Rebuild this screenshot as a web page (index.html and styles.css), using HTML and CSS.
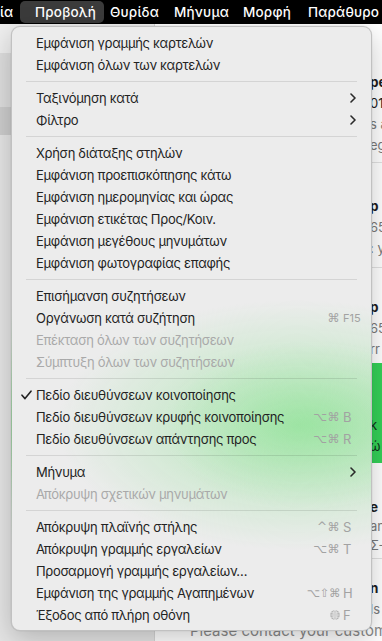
FILE: index.html
```html
<!DOCTYPE html>
<html lang="el">
<head>
<meta charset="utf-8">
<title>Mail – Προβολή</title>
<link rel="stylesheet" href="styles.css">
</head>
<body>
<div class="screen">
  <header class="menubar">
    <span class="mb-item mb-first">ία</span>
    <span class="mb-item mb-active">Προβολή</span>
    <span class="mb-item mb-w1">Θυρίδα</span>
    <span class="mb-item mb-w2">Μήνυμα</span>
    <span class="mb-item mb-w3">Μορφή</span>
    <span class="mb-item">Παράθυρο</span>
  </header>

  <div class="workspace">
    <aside class="sidebar">
      <div class="sb-top"></div>
      <div class="sb-group"></div>
      <div class="sb-selected"></div>
      <div class="sb-rest"></div>
    </aside>
    <main class="list">
      <div class="card card-a">
        <div class="ln strong">pe</div>
        <div class="ln">01</div>
        <div class="ln dim">s a</div>
        <div class="ln dim">eg</div>
      </div>
      <div class="card card-b">
        <div class="ln strong">p</div>
        <div class="ln dim">65</div>
        <div class="ln dim">: y</div>
      </div>
      <div class="card card-c">
        <div class="ln strong">p</div>
        <div class="ln dim">65</div>
        <div class="ln dim">rr</div>
      </div>
      <div class="card card-green">
        <div class="ln">k</div>
        <div class="ln">ώ</div>
      </div>
      <div class="card card-e">
        <div class="ln strong">e</div>
        <div class="ln dim">an</div>
        <div class="ln dim">Σ-</div>
      </div>
      <div class="card card-f">
        <div class="ln strong">n</div>
        <div class="ln dim">ls</div>
        <div class="ln note">Please contact your customer service</div>
      </div>
    </main>
  </div>

  <nav class="menu">
    <div class="item"><span class="label">Εμφάνιση γραμμής καρτελών</span></div>
    <div class="item"><span class="label">Εμφάνιση όλων των καρτελών</span></div>
    <div class="sep"></div>
    <div class="item"><span class="label">Ταξινόμηση κατά</span>
      <svg class="chev" width="6" height="10" viewBox="0 0 6 10"><path d="M1 1 L5 5 L1 9" fill="none" stroke="#2a2a2a" stroke-width="1.6" stroke-linecap="round" stroke-linejoin="round"/></svg></div>
    <div class="item"><span class="label">Φίλτρο</span>
      <svg class="chev" width="6" height="10" viewBox="0 0 6 10"><path d="M1 1 L5 5 L1 9" fill="none" stroke="#2a2a2a" stroke-width="1.6" stroke-linecap="round" stroke-linejoin="round"/></svg></div>
    <div class="sep"></div>
    <div class="item"><span class="label">Χρήση διάταξης στηλών</span></div>
    <div class="item"><span class="label">Εμφάνιση προεπισκόπησης κάτω</span></div>
    <div class="item"><span class="label">Εμφάνιση ημερομηνίας και ώρας</span></div>
    <div class="item"><span class="label">Εμφάνιση ετικέτας Προς/Κοιν.</span></div>
    <div class="item"><span class="label">Εμφάνιση μεγέθους μηνυμάτων</span></div>
    <div class="item"><span class="label">Εμφάνιση φωτογραφίας επαφής</span></div>
    <div class="sep"></div>
    <div class="item"><span class="label">Επισήμανση συζητήσεων</span></div>
    <div class="item"><span class="label">Οργάνωση κατά συζήτηση</span>
      <span class="sc"><span class="mods">⌘</span><span class="key small">F15</span></span></div>
    <div class="item disabled"><span class="label">Επέκταση όλων των συζητήσεων</span></div>
    <div class="item disabled"><span class="label">Σύμπτυξη όλων των συζητήσεων</span></div>
    <div class="sep"></div>
    <div class="item"><svg class="check" width="11" height="10" viewBox="0 0 11 10"><path d="M1 5.2 L4 8.6 L10 1.2" fill="none" stroke="#222" stroke-width="1.6" stroke-linecap="round" stroke-linejoin="round"/></svg><span class="label">Πεδίο διευθύνσεων κοινοποίησης</span></div>
    <div class="item"><span class="label">Πεδίο διευθύνσεων κρυφής κοινοποίησης</span>
      <span class="sc"><span class="mods">⌥⌘</span><span class="key">B</span></span></div>
    <div class="item"><span class="label">Πεδίο διευθύνσεων απάντησης προς</span>
      <span class="sc"><span class="mods">⌥⌘</span><span class="key">R</span></span></div>
    <div class="sep"></div>
    <div class="item"><span class="label">Μήνυμα</span>
      <svg class="chev" width="6" height="10" viewBox="0 0 6 10"><path d="M1 1 L5 5 L1 9" fill="none" stroke="#2a2a2a" stroke-width="1.6" stroke-linecap="round" stroke-linejoin="round"/></svg></div>
    <div class="item disabled"><span class="label">Απόκρυψη σχετικών μηνυμάτων</span></div>
    <div class="sep"></div>
    <div class="item"><span class="label">Απόκρυψη πλαϊνής στήλης</span>
      <span class="sc"><span class="mods">^⌘</span><span class="key">S</span></span></div>
    <div class="item"><span class="label">Απόκρυψη γραμμής εργαλείων</span>
      <span class="sc"><span class="mods">⌥⌘</span><span class="key">T</span></span></div>
    <div class="item"><span class="label">Προσαρμογή γραμμής εργαλείων…</span></div>
    <div class="item"><span class="label">Εμφάνιση της γραμμής Αγαπημένων</span>
      <span class="sc"><span class="mods tight">⌥⇧⌘</span><span class="key">H</span></span></div>
    <div class="item"><span class="label">Έξοδος από πλήρη οθόνη</span>
      <span class="sc"><span class="mods"><svg class="globe" width="10" height="10" viewBox="0 0 10 10"><circle cx="5" cy="5" r="4.8" fill="#b3b3b3"/><g fill="none" stroke="#ececec" stroke-width="0.7"><ellipse cx="5" cy="5" rx="2" ry="4.6"/><line x1="5" y1="0.3" x2="5" y2="9.7"/><line x1="0.3" y1="5" x2="9.7" y2="5"/><path d="M1.2 2.6 Q5 3.6 8.8 2.6"/><path d="M1.2 7.4 Q5 6.4 8.8 7.4"/></g></svg></span><span class="key">F</span></span></div>
  </nav>
</div>
</body>
</html>
```

FILE: styles.css
```css
* { box-sizing: border-box; margin: 0; padding: 0; }

html, body {
  width: 382px;
  height: 641px;
  overflow: hidden;
  background: #ffffff;
}

body {
  font-family: "Inter", "Noto Sans", "DejaVu Sans", sans-serif;
}

.screen {
  position: relative;
  width: 382px;
  height: 641px;
  display: flex;
  flex-direction: column;
  overflow: hidden;
}

/* ---------- menu bar ---------- */
.menubar {
  height: 24px;
  background: #000;
  display: flex;
  align-items: center;
  color: #fff;
  font-size: 13.5px;
  font-weight: 500;
  letter-spacing: 0.2px;
  overflow: hidden;
}

.mb-item {
  flex-shrink: 0;
  line-height: 22px;
  white-space: nowrap;
}

.mb-first { width: 20px; }

.mb-active {
  width: 84px;
  height: 22px;
  padding-left: 15px;
  background: #3b3b3b;
  border-radius: 5px;
  margin-right: 6px;
}

.mb-w1 { width: 64px; }
.mb-w2 { width: 69px; }
.mb-w3 { width: 65px; }

/* ---------- background window ---------- */
.workspace {
  flex: 1;
  display: flex;
  min-height: 0;
}

.sidebar {
  width: 155px;
  flex-shrink: 0;
  display: flex;
  flex-direction: column;
  background: #e4e4e4;
  border-right: 1px solid #d6d6d6;
}
.sb-top { height: 29px; background: #efefef; }
.sb-group { height: 54px; background: #dedede; }
.sb-selected { height: 28px; background: #cdcdcd; }
.sb-rest { flex: 1; background: #e5e5e5; }

.list {
  flex: 1;
  min-width: 0;
  overflow: hidden;
  display: flex;
  flex-direction: column;
  background: #fff;
}

.card {
  padding-left: 215px;
  font-size: 13px;
  color: #1e1e1e;
}
.card .ln {
  line-height: 21px;
  height: 21px;
  white-space: nowrap;
}
.card .strong { font-weight: 700; font-size: 13.5px; }
.card .dim { color: #7a7a7a; }

.card-a { height: 139px; padding-top: 48px; border-bottom: 1px solid #e2e2e2; }
.card-b { height: 105px; padding-top: 33px; border-bottom: 1px solid #e2e2e2; }
.card-c { height: 96px; padding-top: 29px; }
.card-green { height: 100px; padding-top: 52px; background: #34d158; color: #10301a; }
.card-e { height: 96px; padding-top: 35px; border-bottom: 1px solid #e2e2e2; }
.card-e .ln { height: 19px; line-height: 19px; }
.card-f { flex: 1; padding-top: 19px; padding-left: 0; }
.card-f .ln { padding-left: 215px; }
.card-f .note {
  padding-left: 35px;
  color: #8a8a8a;
  font-size: 15px;
}

/* ---------- dropdown menu ---------- */
.menu {
  position: absolute;
  left: 11px;
  top: 26px;
  width: 361px;
  padding: 5px 0 4px;
  border-radius: 9px;
  border: 0.5px solid rgba(0, 0, 0, 0.18);
  background:
    radial-gradient(ellipse 150px 85px at 300px 398px, rgba(110, 222, 120, 0.32), rgba(110, 222, 120, 0) 100%),
    radial-gradient(ellipse 240px 125px at 285px 398px, rgba(130, 226, 138, 0.55), rgba(130, 226, 138, 0) 100%),
    #ececec;
  box-shadow: 0 8px 28px rgba(0, 0, 0, 0.22), 0 0 0 0.5px rgba(0, 0, 0, 0.06);
  font-size: 13px;
  letter-spacing: -0.3px;
  color: #232323;
}

.item {
  position: relative;
  height: 22px;
  display: flex;
  align-items: center;
  padding: 0 10px 0 24px;
  white-space: nowrap;
}

.item .label { flex: 1; }

.item.disabled { color: #a9a9a9; }

.sep {
  height: 1px;
  margin: 5px 14px;
  background: rgba(0, 0, 0, 0.1);
}

.check {
  position: absolute;
  left: 9px;
  top: 6px;
}

.chev {
  margin-right: 5px;
}

.sc {
  display: flex;
  align-items: center;
  color: #a2a2a2;
  font-size: 13px;
  letter-spacing: 0;
}
.sc .mods {
  display: flex;
  align-items: center;
  justify-content: flex-end;
  font-family: "DejaVu Sans", sans-serif;
  font-size: 12px;
  letter-spacing: 0.5px;
}
.sc .mods.tight { letter-spacing: -0.5px; font-size: 11.5px; }
.sc .key {
  width: 18px;
  margin-left: 3px;
}
.sc .key.small { font-size: 11px; }

.globe { display: block; }
```
